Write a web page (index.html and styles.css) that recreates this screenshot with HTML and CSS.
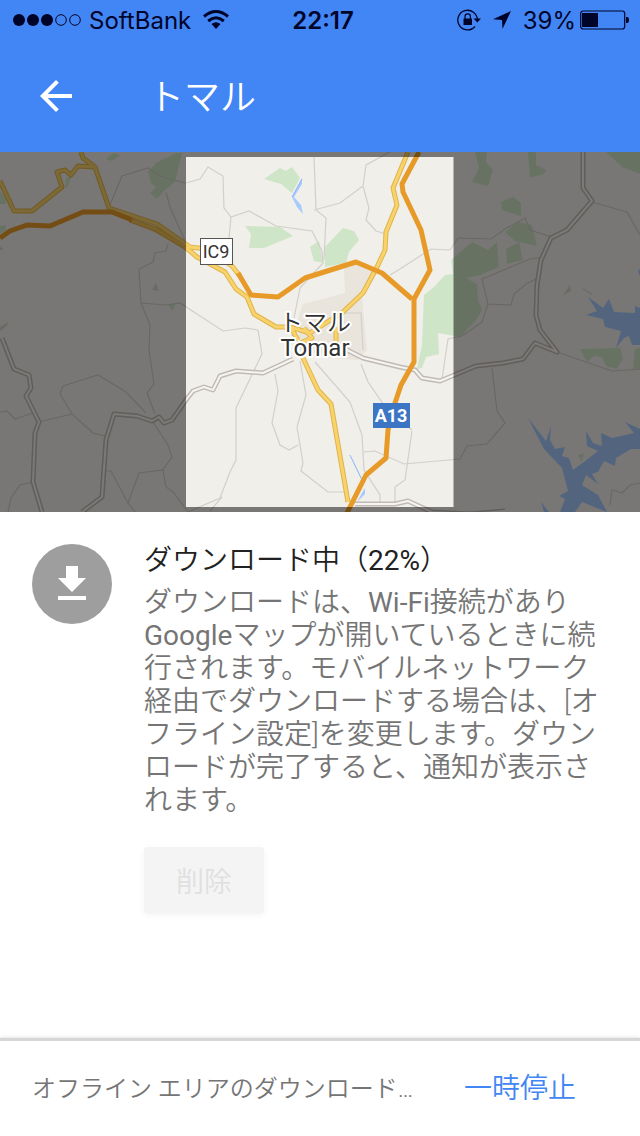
FILE: index.html
```html
<!DOCTYPE html>
<html lang="ja">
<head>
    <meta charset="UTF-8">
    <meta name="viewport" content="width=device-width, initial-scale=1.0">
    <title>トマル</title>
    <link rel="stylesheet" href="styles.css">
</head>
<body>
    <header class="top">
        <div class="status-bar">
            <div class="status-left">
                <svg class="signal" width="68" height="12" viewBox="0 0 68 12">
                    <circle cx="6" cy="6" r="6"/>
                    <circle cx="20" cy="6" r="6"/>
                    <circle cx="34" cy="6" r="6"/>
                    <circle cx="48" cy="6" r="5.3" fill="none" stroke="#000428" stroke-width="1"/>
                    <circle cx="62" cy="6" r="5.3" fill="none" stroke="#000428" stroke-width="1"/>
                </svg>
                <span>SoftBank</span>
                <svg class="wifi" width="26" height="20" viewBox="0 0 26 20">
                    <path d="M1 6.5Q13-3.5 25 6.5" fill="none" stroke="#000428" stroke-width="3"/>
                    <path d="M5.2 11Q13 4.5 20.8 11" fill="none" stroke="#000428" stroke-width="3"/>
                    <path d="M8.5 14Q13 10.5 17.5 14L13 19z"/>
                </svg>
            </div>
            <span class="clock">22:17</span>
            <div class="status-right">
                <svg width="24" height="22" viewBox="0 0 24 22">
                    <path d="M18 17.5A9.8 9.8 0 1 1 20.4 11" fill="none" stroke="#000428" stroke-width="1.3"/>
                    <path d="M16.5 9.5H24L20.3 13.5z"/>
                    <rect x="6.5" y="9.5" width="8.5" height="6.5" rx="0.5"/>
                    <path d="M8 10V7.5a2.7 2.7 0 0 1 5.4 0V10" fill="none" stroke="#000428" stroke-width="1.2"/>
                </svg>
                <svg width="18" height="18" viewBox="0 0 18 18">
                    <path d="M18 0L0 8.2L9 9L9.5 18z"/>
                </svg>
                <span class="percent">39%</span>
                <svg class="battery" width="49" height="20" viewBox="0 0 49 20">
                    <rect x="0.7" y="1" width="44" height="18" rx="2.5" fill="none" stroke="#000428" stroke-width="1.2"/>
                    <rect x="2" y="3" width="16" height="14"/>
                    <path d="M46 7h1q2 0 2 3t-2 3h-1z"/>
                </svg>
            </div>
        </div>
        <div class="app-bar">
            <button class="back" type="button" aria-label="戻る">
                <svg width="32" height="32" viewBox="0 0 32 32">
                    <path d="M32 14v4H7.7l11.1 11.2L16 32 0 16 16 0l2.8 2.8L7.7 14z" fill="#fff"/>
                </svg>
            </button>
            <h1>トマル</h1>
        </div>
    </header>

    <main>
        <svg class="map" viewBox="0 152 640 360" preserveAspectRatio="xMidYMid slice" role="img" aria-label="トマルの地図">
            <defs>
                <!-- each group is drawn twice: casing, then core -->
                <g id="white-roads">
                    <path d="M2 338L14 369L29 375L31 388L26 396L39 422L35 433L33 482L42 512"/>
                    <path d="M82 512L102 497L106 440L114 414L137 416L152 421L159 417L164 423L172 420L186 400L193 391L204 387L213 390L220 376L236 371L263 373L293 359"/>
                    <path d="M345 349L363 358L400 367L415 370L422 378L440 381L476 366L503 363L523 359L535 343L557 352L540 330L536 315L537 285L541 260L551 238L567 230L592 201L583 188V152"/>
                    <path d="M355 504H395L408 501L432 512L470 514L505 511"/>
                </g>
                <g id="yellow-roads">
                    <path d="M0 181L14 211H32L62 187L57 172L65 170L71 175L78 166L95 167L109 208L157 224L190 247L206 249L232 266L240 276M81 152L83 158L95 167"/>
                    <path d="M130 220L155 229L184 246L197 257L225 272L236 289L247 297L254 314L276 327H290L310 333L343 312L363 293L377 267L385 250L386 232L397 205L393 188L408 152"/>
                    <path d="M303 358L318 390L331 404L348 502"/>
                    <path d="M290 326L298 340M304 328L312 338L298 344M336 327L336 344"/>
                </g>
            </defs>

            <rect x="-700" y="152" width="2040" height="360" fill="#f0efea"/>

            <!-- town -->
            <path fill="#e9e4dc" d="M298 318L303 304L345 293L344 268L357 264L378 272L362 297L367 350L358 360L330 358L300 350z"/>

            <!-- parks and woods -->
            <g fill="#cfe5c7">
                <path d="M264 179L280 168L286 171L292 167L300 178L292 193L281 184z"/>
                <path d="M245 226L280 227L293 236L264 248L249 248L251 234z"/>
                <path d="M310 247L319 241L323 263L314 261z"/>
                <path d="M343 228L354 231L359 240L349 252L346 263L325 267L325 247z"/>
                <path d="M424 295L434 287L445 275L453 274L451 260L472 242L482 247L488 250L497 242L499 267L480 275L466 278L477 284L478 300L482 310L476 320L460 337L438 333L439 354L426 357L422 368L417 369L422 345z"/>
                <path d="M475 152H487L486 162L493 170L488 186L472 182L479 168z"/>
                <path d="M528 152H536L536 165L546 170L544 174L536 176L530 178z"/>
                <path d="M501 202L513 197L521 203L521 216L502 210z"/>
                <path d="M505 232L518 222L532 225L537 246L515 241z"/>
                <path d="M506 249L519 242L523 260L507 264z"/>
                <path d="M606 152H640V174L622 167z"/>
                <path d="M580 349L620 348L623 358L617 369L606 366L602 357L594 356L587 362z"/>
                <path d="M633 369L635 349L640 348V370z"/>
                <path d="M148 172L156 163L176 153H182L175 182L165 190L157 199L150 193L156 187L151 183z"/>
                <path d="M106 159L113 153L120 155L112 161z"/>
                <path d="M0 190L6 200L6 204L0 204z"/>
                <path d="M0 226L6 225L6 230L0 234z"/>
                <path d="M65 187L66 178L72 176L67 188z"/>
                <path d="M168 304L176 304L172 311z"/>
                <path d="M578 455L584 453L582 462z"/>
            </g>
            <g fill="#d6d6cd">
                <path d="M152 290L156 283L159 291z"/>
                <path d="M563 295L570 285L571 291z"/>
                <path d="M0 246L4 250H0z"/>
                <path d="M0 327L8 322L7 326L0 331z"/>
            </g>

            <!-- water -->
            <g fill="#a7c9ff">
                <path d="M292 197L302 178L302 184L294 197L301 205L303 214L297 207z"/>
                <path d="M357 502L362 493L365 488V494z"/>
                <path d="M350 455L362 479L360 476z"/>
                <path d="M588 297L603 308L609 299L614 312L635 313V306L640 308V345L632 345L629 336L624 338L616 348L621 331L605 327L603 319L586 315L597 311z"/>
                <path d="M638 271L640 269V276z"/>
                <path d="M528 418L546 441L551 426L550 440L555 449L565 447L562 456L569 458L573 470L584 462L598 451L587 446L586 431L593 443L602 446L601 433L612 438L634 433L625 422L640 429V449L631 449L616 458L615 466L604 461L598 472L592 474L598 484L586 475L582 485L598 495L607 512L582 502L575 512H560L565 499L559 496L568 491L562 468L544 449z"/>
                <path d="M541 502L549 512H544z"/>
            </g>
            <path fill="none" stroke="#8ab8f8" d="M292 197L302 179M350 455L362 480M295 328L292 336"/>

            <!-- small roads -->
            <g fill="none" stroke="#d3cfca" stroke-width="1.2">
                <path d="M186 183L200 179L208 167L223 176L224 208L231 217L249 211L276 226L312 231L322 251L323 263L300 288L294 318M231 217L229 238"/>
                <path d="M314 157L316 210L326 218L324 260M314 210L340 203L363 186L366 165L390 152M363 186L369 208L366 220L376 231L386 234"/>
                <path d="M390 275L400 269L431 249L450 250L458 238L491 239L505 229L525 218L530 230L552 237"/>
                <path d="M110 205L122 176L148 168L160 176L185 183M166 192L170 207L185 241"/>
                <path d="M168 244L166 251L155 253L153 262L139 269L141 303L166 305L180 303L223 331L245 328L258 330"/>
                <path d="M141 303L150 325L149 350L154 384L147 393L155 414M60 394L63 386L98 375L126 392L146 413M60 394L72 414L38 422M72 414L93 433L105 436"/>
                <path d="M0 412L7 411L15 419L33 413M8 512L11 498L20 485L33 482M105 471H111L128 503L139 473L163 470L166 487L173 492L188 512L220 498L230 472L236 460V408L262 354L258 330"/>
                <path d="M153 422L168 445L172 457L162 471M128 503L135 512M210 511L222 497"/>
                <path d="M275 374L278 391L272 423L280 445L289 450L298 445M300 361L306 395L297 427L303 463L301 471L328 492H345"/>
                <path d="M315 362L350 402L362 435L364 470L380 495V504M361 364L368 382L386 408L412 430"/>
                <path d="M364 452L375 451L404 464L460 459L467 446L487 444L505 423L497 411L492 368"/>
                <path d="M412 431L405 480L395 487V504M442 379L448 339L462 336L482 322L488 304L482 279L530 259L543 257M488 304L511 305L514 294L526 284L536 279"/>
                <path d="M592 202L627 212L640 235M557 352L612 371L640 369M640 483L630 485L622 493L612 490L610 505"/>
                <path d="M345 313L361 313L363 350M583 289L592 294"/>
            </g>

            <g fill="none" stroke-linejoin="round">
                <use href="#white-roads" stroke="#c1bab4" stroke-width="5"/>
                <use href="#white-roads" stroke="#f6f4f0" stroke-width="2"/>
                <use href="#yellow-roads" stroke="#e0b44a" stroke-width="5"/>
                <use href="#yellow-roads" stroke="#f8d36c" stroke-width="3"/>
            </g>

            <!-- motorways -->
            <g fill="none" stroke="#e79a27" stroke-width="5" stroke-linejoin="round">
                <path d="M130 220L158 231L186 248" stroke-opacity="0.3"/>
                <path d="M0 238L10 231L27 225L50 226L83 212H112L132 220"/>
                <path d="M238 273L251 295L278 297L305 278L356 262L382 273L412 299"/>
                <path d="M419 152L402 184L403 192L421 230L430 270L414 299V362L401 385L395 403L388 430L386 458L366 475L347 513"/>
            </g>

            <!-- everything outside the offline area is dimmed -->
            <path fill="#000" fill-opacity="0.5" fill-rule="evenodd" d="M-700 152H1340V512H-700zM186 157V507H453.5V157z"/>

            <rect x="200.5" y="238.5" width="32" height="26" fill="#fff" stroke="#555"/>
            <text class="road-label" x="216" y="258">IC9</text>
            <rect x="373" y="403" width="37" height="25" fill="#3c75c3"/>
            <text class="motorway-label" x="391" y="422">A13</text>
            <text class="town-label" x="315" y="331">トマル</text>
            <text class="town-label latin" x="315" y="356">Tomar</text>
        </svg>

        <section class="download">
            <svg class="download-icon" width="80" height="80" viewBox="0 0 80 80">
                <circle cx="40" cy="40" r="40" fill="#9e9e9e"/>
                <path d="M34 22h12v12h8L40 48 26 34h8zM26 52h28v4H26z" fill="#fff"/>
            </svg>
            <div class="download-text">
                <h2>ダウンロード中（<span class="latin">22%</span>）</h2>
                <p>ダウンロードは、<span class="latin">Wi-Fi</span>接続があり<span class="latin">Google</span>マップが開いているときに続行されます。モバイルネットワーク経由でダウンロードする場合は、[オフライン設定]を変更します。ダウンロードが完了すると、通知が表示されます。</p>
                <button class="delete" type="button" disabled>削除</button>
            </div>
        </section>
    </main>

    <footer class="bottom-bar">
        <span class="message">オフライン エリアのダウンロード…</span>
        <button class="pause" type="button">一時停止</button>
    </footer>
</body>
</html>
```
FILE: styles.css
```css
* {
    box-sizing: border-box;
}
body {
    margin: 0;
    min-height: 100vh;
    display: flex;
    flex-direction: column;
    background-color: #fff;
    color: #212121;
    font-family: Roboto, "Noto Sans CJK JP", sans-serif;
    font-weight: 350;
}
h1, h2, p {
    margin: 0;
    font-weight: 350;
}
svg {
    display: block;
    flex-shrink: 0;
}
button {
    border: none;
    font-family: inherit;
    font-weight: 350;
    font-size: 28px;
    cursor: pointer;
}
.top {
    background-color: #4285f4;
}
.status-bar {
    display: grid;
    grid-template-columns: 1fr auto 1fr;
    align-items: center;
    height: 40px;
    padding: 0 11px 0 13px;
    color: #000428;
    fill: #000428;
    font-family: Inter, sans-serif;
    font-size: 24px;
    font-weight: 400;
}
.status-left, .status-right {
    display: flex;
    align-items: center;
}
.status-left {
    gap: 8px;
}
.status-right {
    justify-content: flex-end;
    gap: 12px;
}
.wifi {
    margin-left: 4px;
}
.battery {
    margin-left: -8px;
}
.clock {
    padding-left: 4px;
    font-weight: 600;
}
.app-bar {
    display: flex;
    align-items: center;
    height: 112px;
    padding: 0 32px;
}
.back {
    padding: 8px;
    background: none;
}
h1 {
    margin-left: 68px;
    padding-bottom: 4px;
    color: #fff;
    font-size: 36px;
}
.map {
    width: 100%;
    height: 360px;
}
.road-label, .motorway-label, .town-label {
    text-anchor: middle;
}
.road-label {
    font-size: 18px;
    font-weight: 400;
    fill: #333;
}
.motorway-label {
    font-size: 18px;
    font-weight: 700;
    fill: #fff;
}
.town-label {
    font-size: 24px;
    fill: #333;
    stroke: #fff;
    stroke-width: 4px;
    stroke-linejoin: round;
    paint-order: stroke;
}
.latin {
    font-weight: 400;
}
.download {
    display: flex;
    align-items: flex-start;
    gap: 32px;
    padding: 32px;
}
.download-text {
    flex: 1;
}
h2 {
    font-size: 28px;
    line-height: 34px;
}
.download-text p {
    margin-top: 8px;
    color: #757575;
    font-size: 28px;
    line-height: 33px;
}
.delete {
    width: 120px;
    height: 66px;
    margin-top: 30px;
    border-radius: 4px;
    background-color: #f4f4f4;
    color: #e0e0e0;
    box-shadow: 0 2px 6px rgba(0, 0, 0, 0.05);
    cursor: default;
}
.bottom-bar {
    display: flex;
    align-items: center;
    justify-content: space-between;
    height: 98px;
    margin-top: auto;
    padding: 0 64px 5px 32px;
    border-top: 3px solid #d6d6d6;
    box-shadow: 0 -1px 3px rgba(0, 0, 0, 0.1);
}
.message {
    color: #757575;
    font-size: 24px;
}
.pause {
    padding: 0;
    background: none;
    color: #4285f4;
}
```
